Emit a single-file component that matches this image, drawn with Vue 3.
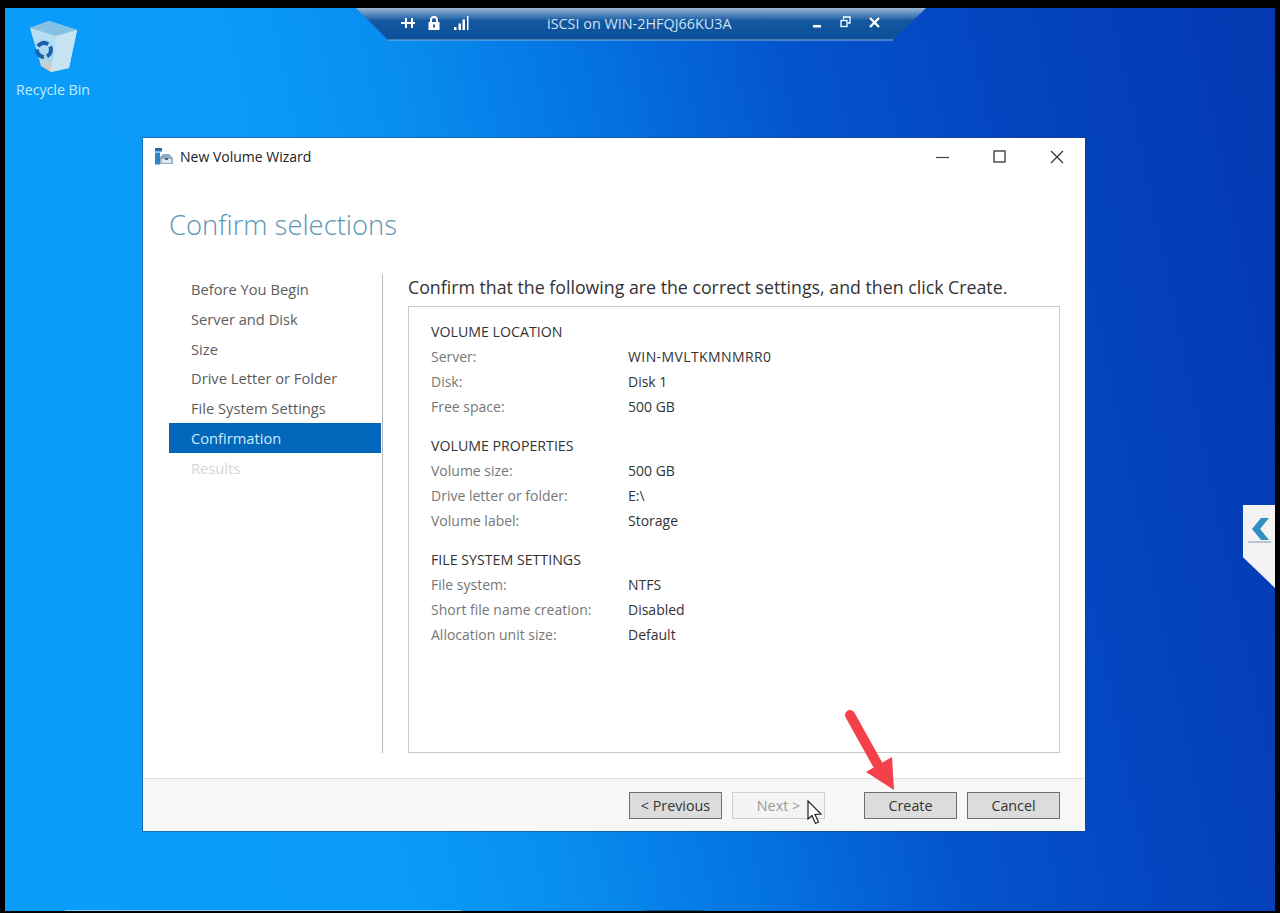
<script setup>
const steps = [
  { label: 'Before You Begin' },
  { label: 'Server and Disk' },
  { label: 'Size' },
  { label: 'Drive Letter or Folder' },
  { label: 'File System Settings' },
  { label: 'Confirmation', active: true },
  { label: 'Results', disabled: true },
]

const sections = [
  {
    title: 'VOLUME LOCATION',
    rows: [
      ['Server:', 'WIN-MVLTKMNMRR0'],
      ['Disk:', 'Disk 1'],
      ['Free space:', '500 GB'],
    ],
  },
  {
    title: 'VOLUME PROPERTIES',
    rows: [
      ['Volume size:', '500 GB'],
      ['Drive letter or folder:', 'E:\\'],
      ['Volume label:', 'Storage'],
    ],
  },
  {
    title: 'FILE SYSTEM SETTINGS',
    rows: [
      ['File system:', 'NTFS'],
      ['Short file name creation:', 'Disabled'],
      ['Allocation unit size:', 'Default'],
    ],
  },
]
</script>

<template>
  <div class="screen">
    <div class="desktop">
      <!-- recycle bin -->
      <div class="bin">
        <svg width="50" height="54" viewBox="0 0 50 54">
          <defs>
            <linearGradient id="binFill" x1="0" y1="0" x2="0" y2="1">
              <stop offset="0" stop-color="#c4e4f5" />
              <stop offset="0.72" stop-color="#a6d6f0" />
              <stop offset="1" stop-color="#ecc9ae" />
            </linearGradient>
          </defs>
          <path d="M2 9 L21 2 L49 11 L41 49 L23 53 L13 47 Z" fill="url(#binFill)" />
          <path d="M2 9 L21 2 L49 11 L28 17 Z" fill="#86c0e2" />
          <path d="M28 17 L49 11 L41 49 L23 53 Z" fill="#c6e4f3" />
          <circle cx="16" cy="31" r="7" fill="none" stroke="#1c62ae" stroke-width="4" stroke-dasharray="11.500 3.160" transform="rotate(-30 16 31)" />
        </svg>
        <span>Recycle Bin</span>
      </div>

      <!-- remote session bar -->
      <div class="conn-bar">
        <svg class="conn-shape" width="570" height="33" viewBox="0 0 570 33">
          <defs>
            <linearGradient id="barFill" x1="0" y1="0" x2="0" y2="1">
              <stop offset="0" stop-color="#9db6d2" />
              <stop offset="0.22" stop-color="#4f83bb" />
              <stop offset="0.4" stop-color="#14589f" />
              <stop offset="1" stop-color="#0a4e9b" />
            </linearGradient>
          </defs>
          <path d="M0 0 L570 0 L537 32 L32 32 Z" fill="url(#barFill)" />
          <path d="M32 32 L537 32" stroke="#8fb2d6" stroke-width="1" />
        </svg>
        <div class="conn-left">
          <svg width="14" height="12" viewBox="0 0 14 12"><path d="M0 6 H14 M5 1 V11 M11 1 V11" stroke="#fff" stroke-width="2" fill="none" /></svg>
          <svg width="14" height="14" viewBox="0 0 14 14"><path d="M4 6 V4 a3 3 0 0 1 6 0 V6" stroke="#fff" stroke-width="2" fill="none" /><rect x="1.500" y="6" width="11" height="8" fill="#fff" /><rect x="6" y="8.500" width="2" height="3" fill="#22609f" /></svg>
          <svg class="signal" width="15" height="14" viewBox="0 0 15 14"><path d="M0 11 h2.500 v3 h-2.500 Z M4.500 7.500 h2.500 v6.500 h-2.500 Z M8.500 3.500 h2.500 v10.500 h-2.500 Z M13 0 h1.500 v14 h-1.500 Z" fill="#fff" /></svg>
        </div>
        <span class="conn-title">iSCSI on WIN-2HFQJ66KU3A</span>
        <div class="conn-right">
          <svg width="9" height="11" viewBox="0 0 9 11"><rect x="0" y="8" width="8" height="2.500" fill="#fff" /></svg>
          <svg width="11" height="12" viewBox="0 0 11 12"><path d="M3.500 3.500 V1 H10 V7 H7.500" stroke="#fff" stroke-width="1.300" fill="none" /><rect x="1" y="4.500" width="6" height="6" stroke="#fff" stroke-width="1.300" fill="none" /></svg>
          <svg width="11" height="11" viewBox="0 0 11 11"><path d="M1 1 L10 10 M10 1 L1 10" stroke="#fff" stroke-width="2.400" /></svg>
        </div>
      </div>

      <!-- wizard window -->
      <div class="window">
        <div class="titlebar">
          <svg width="18" height="17" viewBox="0 0 18 17">
            <rect x="0" y="0" width="7" height="3.500" fill="#1c6fb4" />
            <rect x="0" y="4.500" width="5" height="12" fill="#2b86c9" />
            <path d="M5 9 L8 6 H14 L18 10 V16 H5 Z" fill="#8fa9bd" />
            <rect x="6.500" y="11" width="10" height="4" fill="#dfe7ee" />
            <rect x="10" y="10" width="3" height="2" fill="#51697d" />
          </svg>
          <span class="win-title">New Volume Wizard</span>
          <div class="win-controls">
            <svg width="14" height="14" viewBox="0 0 14 14"><path d="M0 7.500 H13" stroke="#444" stroke-width="1.200" /></svg>
            <svg width="14" height="14" viewBox="0 0 14 14"><rect x="1" y="1" width="11" height="11" stroke="#333" stroke-width="1.300" fill="none" /></svg>
            <svg width="14" height="14" viewBox="0 0 14 14"><path d="M1 1 L13 13 M13 1 L1 13" stroke="#333" stroke-width="1.200" /></svg>
          </div>
        </div>

        <h1 class="heading">Confirm selections</h1>

        <div class="body">
          <ul class="steps">
            <li
              v-for="step in steps"
              :key="step.label"
              :class="{ active: step.active, disabled: step.disabled }"
            >
              {{ step.label }}
            </li>
          </ul>

          <div class="main">
            <p class="intro">Confirm that the following are the correct settings, and then click Create.</p>
            <div class="summary">
              <section v-for="section in sections" :key="section.title" class="group">
                <h2>{{ section.title }}</h2>
                <div v-for="row in section.rows" :key="row[0]" class="row">
                  <span class="key">{{ row[0] }}</span>
                  <span class="val" :class="{ host: row[1].startsWith('WIN-') }">{{ row[1] }}</span>
                </div>
              </section>
            </div>
          </div>
        </div>

        <div class="footer">
          <button class="btn">&lt; Previous</button>
          <button class="btn off">Next &gt;</button>
          <button class="btn create">Create</button>
          <button class="btn">Cancel</button>
        </div>
      </div>

      <!-- arrow annotation and pointer -->
      <svg class="arrow" width="60" height="100" viewBox="0 0 60 100">
        <path d="M7 5 L36 57" stroke="#f4404a" stroke-width="10" stroke-linecap="round" fill="none" />
        <path d="M23 62 L49 47 L51 80 Z" fill="#f4404a" />
      </svg>
      <svg class="pointer" width="18" height="26" viewBox="0 0 18 26">
        <path d="M2 1 V19 L6 15.500 L9.500 23.500 L12.500 22 L9 14.500 L15 14 Z" fill="#fff" stroke="#222" stroke-width="1.200" />
      </svg>

      <!-- side tab -->
      <div class="side-tab">
        <svg width="24" height="25" viewBox="0 0 24 25">
          <path d="M13 0 L4 11 L13 22 H21 L12 11 L21 0 Z" fill="#2f8fc2" />
          <path d="M0 24 H23" stroke="#7f98a8" stroke-width="1" />
        </svg>
      </div>

      <div class="bottom-strip"></div>
      <div class="bottom-strip faint"></div>
    </div>
  </div>
</template>

<style scoped>
.screen {
  width: 1280px;
  height: 913px;
  background: #000;
  padding: 8px 5px 2px 5px;
  box-sizing: border-box;
  font-family: "Open Sans", "Noto Sans", sans-serif;
}

.desktop {
  position: relative;
  width: 100%;
  height: 100%;
  overflow: hidden;
  background: linear-gradient(78deg, #0a9efc 0%, #0a9af8 28%, #088ef0 38.500%, #0472e0 52.600%, #0454cc 66%, #0445c0 80%, #0338b0 100%);
}

.bin {
  position: absolute;
  left: 0;
  top: 11px;
  width: 96px;
  display: flex;
  flex-direction: column;
  align-items: center;
  color: #c4ecff;
  font-size: 14.200px;
}

.bin span {
  margin-top: 8px;
  line-height: 18px;
}

.conn-bar {
  position: absolute;
  left: 351px;
  top: 0;
  width: 570px;
  height: 33px;
  display: flex;
  align-items: center;
  color: #cfe2f5;
}

.conn-shape {
  position: absolute;
  left: 0;
  top: 0;
}

.conn-left,
.conn-right,
.conn-title {
  position: relative;
}

.conn-left {
  display: flex;
  align-items: center;
  gap: 12px;
  margin-left: 45px;
  margin-top: -4px;
}

.signal {
  margin-left: 1px;
}

.conn-title {
  position: absolute;
  left: 191px;
  top: 6px;
  font-size: 14.400px;
  line-height: 20px;
}

.conn-right {
  position: absolute;
  left: 457px;
  top: 8px;
  display: flex;
  align-items: center;
  gap: 18px;
}

.window {
  position: absolute;
  left: 138px;
  top: 130px;
  width: 942px;
  height: 693px;
  background: #fff;
  box-shadow: 0 0 0 1px rgba(30, 60, 100, 0.45);
  display: flex;
  flex-direction: column;
}

.titlebar {
  height: 37px;
  display: flex;
  align-items: center;
  padding: 0 21px 0 12px;
  flex-shrink: 0;
}

.win-title {
  margin-left: 7px;
  font-size: 14px;
  color: #222;
}

.win-controls {
  margin-left: auto;
  display: flex;
  gap: 43px;
}

.heading {
  margin: 30px 0 0 26px;
  font-size: 27.400px;
  font-weight: 300;
  line-height: 40px;
  color: #5a96b4;
}

.body {
  flex: 1;
  display: flex;
  margin-top: 29px;
  min-height: 0;
}

.steps {
  list-style: none;
  margin: 0 0 25px 26px;
  padding: 0 1px 0 0;
  width: 212px;
  flex-shrink: 0;
  border-right: 1px solid #b9b9b9;
  box-sizing: content-box;
}

.steps li {
  height: 29.800px;
  line-height: 30.400px;
  padding-left: 22px;
  font-size: 14.700px;
  color: #5d5d5d;
}

.steps li.active {
  background: #0067bb;
  color: #cfeaff;
}

.steps li.disabled {
  color: #d5d5d5;
}

.main {
  flex: 1;
  padding: 0 25px 25px 25px;
  display: flex;
  flex-direction: column;
  min-width: 0;
}

.intro {
  margin: 0;
  height: 32px;
  line-height: 26px;
  font-size: 17.750px;
  color: #333;
  white-space: nowrap;
}

.summary {
  flex: 1;
  border: 1px solid #c9c9c9;
  padding: 12px 22px;
}

.group {
  margin-bottom: 14.600px;
}

.group h2 {
  margin: 0;
  font-size: 14.200px;
  font-weight: 400;
  line-height: 25px;
  color: #333;
}

.row {
  display: flex;
  height: 24.800px;
  line-height: 26.400px;
  font-size: 14px;
}

.key {
  width: 197px;
  color: #777;
}

.val {
  color: #333;
}

.val.host {
  letter-spacing: 0.4px;
}

.footer {
  height: 53px;
  flex-shrink: 0;
  background: #f7f7f7;
  border-top: 1px solid #dfdfdf;
  display: flex;
  align-items: center;
  padding: 0 25px 0 486px;
  box-sizing: border-box;
}

.btn {
  width: 93px;
  height: 27px;
  flex-shrink: 0;
  padding: 0;
  border: 1px solid #6f6f6f;
  background: #dcdcdc;
  font-family: inherit;
  font-size: 14.300px;
  color: #333;
  margin-right: 10px;
}

.btn:last-child {
  margin-right: 0;
}

.btn.off {
  background: #f4f4f4;
  border-color: #cfcfcf;
  color: #999;
  margin-right: 39px;
}

.arrow {
  position: absolute;
  left: 838px;
  top: 702px;
}

.pointer {
  position: absolute;
  left: 801px;
  top: 792px;
}

.side-tab {
  position: absolute;
  left: 1238px;
  top: 497px;
  width: 32px;
  height: 83px;
  background: #f3f3f3;
  clip-path: polygon(0 0, 100% 0, 100% 100%, 0 63%);
  padding: 13px 0 0 5px;
  box-sizing: border-box;
}

.bottom-strip {
  position: absolute;
  left: 60px;
  bottom: 0;
  width: 396px;
  height: 1px;
  background: #7fd4ff;
}

.bottom-strip.faint {
  left: 640px;
  width: 60px;
  background: #0a5a9c;
}
</style>

<style>
html, body {
  margin: 0;
  background: #000;
}
</style>
